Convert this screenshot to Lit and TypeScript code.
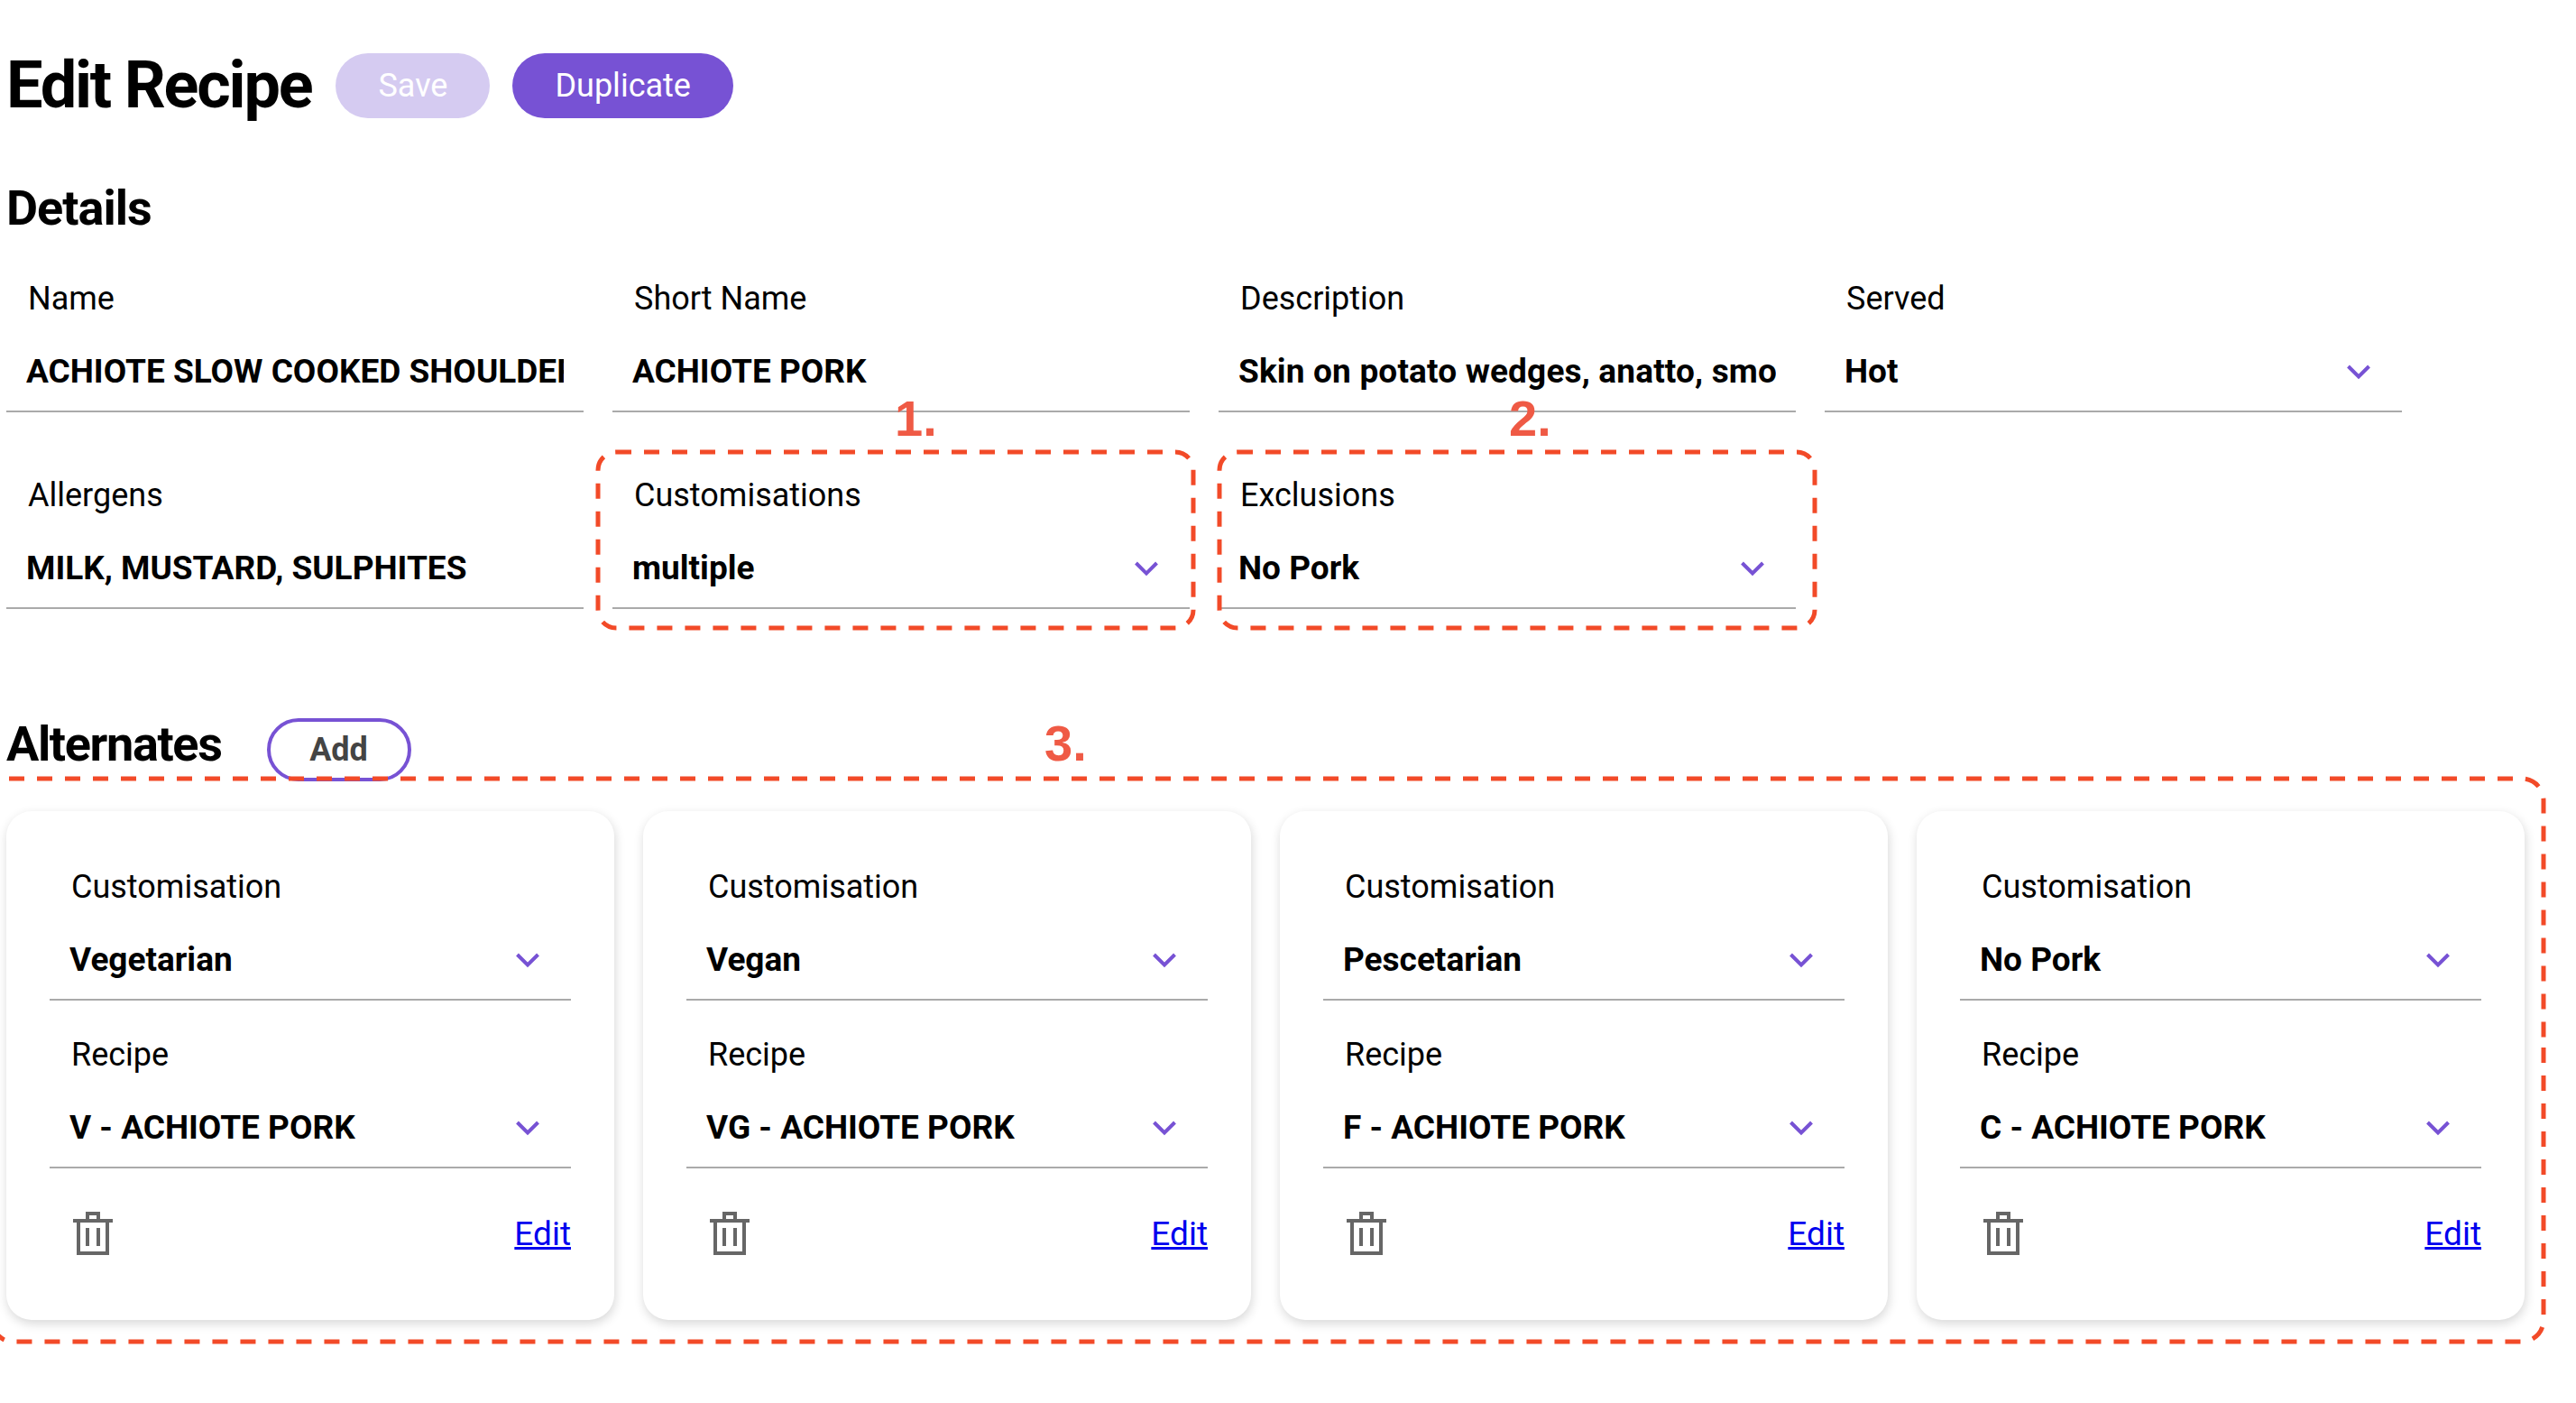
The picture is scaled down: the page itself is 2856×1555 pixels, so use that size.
import { LitElement, html, css, svg } from 'lit';
import { customElement } from 'lit/decorators.js';

interface Field {
  label: string;
  value: string;
  select?: boolean;
  tracked?: boolean;
}

interface Alternate {
  customisation: string;
  recipe: string;
}

const details: Field[] = [
  { label: 'Name', value: 'ACHIOTE SLOW COOKED SHOULDER' },
  { label: 'Short Name', value: 'ACHIOTE PORK' },
  { label: 'Description', value: 'Skin on potato wedges, anatto, smoked paprika', tracked: true },
  { label: 'Served', value: 'Hot', select: true },
  { label: 'Allergens', value: 'MILK, MUSTARD, SULPHITES' },
  { label: 'Customisations', value: 'multiple', select: true },
  { label: 'Exclusions', value: 'No Pork', select: true },
];

const alternates: Alternate[] = [
  { customisation: 'Vegetarian', recipe: 'V - ACHIOTE PORK' },
  { customisation: 'Vegan', recipe: 'VG - ACHIOTE PORK' },
  { customisation: 'Pescetarian', recipe: 'F - ACHIOTE PORK' },
  { customisation: 'No Pork', recipe: 'C - ACHIOTE PORK' },
];

const chevron = html`<svg class="chevron" viewBox="0 0 26 17" aria-hidden="true">
  <path d="M1.5 2 L13 13.5 L24.5 2" fill="none" stroke="currentColor" stroke-width="4" />
</svg>`;

const trash = html`<svg class="trash" viewBox="0 0 44 48" aria-hidden="true">
  <path
    d="M0 10 H44 M6 10 V46 H38 V10 M16 10 V2 H28 V10 M16 18 V38 M28 18 V38"
    fill="none"
    stroke="currentColor"
    stroke-width="4"
  />
</svg>`;

@customElement('app-root')
export class AppRoot extends LitElement {
  static styles = css`
    :host {
      display: block;
      position: relative;
      width: 2856px;
      height: 1555px;
      overflow: hidden;
      background: #fff;
      color: #000;
      font-family: Roboto, sans-serif;
    }
    .page {
      padding: 59px 0 0 7px;
    }
    .title-row {
      display: flex;
      align-items: center;
      height: 72px;
    }
    h1 {
      margin: 0 27px 0 0;
      font-size: 72px;
      line-height: 72px;
      font-weight: 700;
      letter-spacing: -2.2px;
    }
    .btn {
      height: 72px;
      padding: 0 47px;
      margin-right: 25px;
      border: 0;
      border-radius: 36px;
      background: #7752d4;
      color: #fff;
      font: 400 36px Roboto, sans-serif;
    }
    .btn.disabled {
      background: #d5cbf1;
    }
    h2 {
      margin: 0;
      font-size: 54px;
      line-height: 60px;
      font-weight: 700;
      letter-spacing: -1px;
    }
    .details-title {
      margin: 70px 0 46px 0;
    }
    .grid {
      display: grid;
      grid-template-columns: repeat(4, 640px);
      column-gap: 32px;
      row-gap: 68px;
    }
    .field {
      display: flex;
      flex-direction: column;
      height: 150px;
      box-sizing: border-box;
      border-bottom: 2px solid #aaa;
    }
    .label {
      height: 46px;
      padding: 1px 0 0 24px;
      box-sizing: border-box;
      font-size: 36px;
      line-height: 46px;
    }
    .control {
      display: flex;
      align-items: center;
      height: 46px;
      margin-top: 36px;
      padding: 0 22px;
    }
    .value {
      flex: 1;
      min-width: 0;
      overflow: hidden;
      white-space: nowrap;
      font-size: 37px;
      line-height: 46px;
      font-weight: 700;
    }
    .value.tracked {
      letter-spacing: 0.16px;
    }
    .chevron {
      flex: none;
      width: 26px;
      height: 17px;
      margin: 0 13px 0 10px;
      color: #7752d4;
    }
    .alt-row {
      display: flex;
      align-items: center;
      height: 70px;
      margin-top: 121px;
    }
    .alt-row h2 {
      margin: 0 0 12px 0;
      letter-spacing: -1.36px;
    }
    .add {
      width: 160px;
      height: 70px;
      margin-left: 50px;
      padding: 0;
      box-sizing: border-box;
      border: 4px solid #7752d4;
      border-radius: 35px;
      background: transparent;
      color: #444;
      font: 700 36px Roboto, sans-serif;
    }
    .cards {
      display: grid;
      grid-template-columns: repeat(4, 674px);
      column-gap: 32px;
      margin-top: 33px;
    }
    .card {
      display: flex;
      flex-direction: column;
      gap: 36px;
      height: 564px;
      box-sizing: border-box;
      padding: 60px 48px 0;
      border-radius: 28px;
      background: #fff;
      box-shadow: 1px 4px 12px rgba(0, 0, 0, 0.16);
    }
    .footer {
      display: flex;
      align-items: center;
      justify-content: space-between;
      height: 48px;
      margin-top: 12px;
      padding-left: 26px;
    }
    .trash {
      display: block;
      width: 44px;
      height: 48px;
      color: #666;
    }
    .edit {
      color: #0000ee;
      font-size: 37px;
      text-decoration: underline;
    }
    .marks {
      position: absolute;
      left: 0;
      top: 0;
      width: 2856px;
      height: 1555px;
      pointer-events: none;
    }
    .dash {
      fill: none;
      stroke: #f24a28;
      stroke-width: 5;
      stroke-dasharray: 17 14;
    }
    .num {
      position: absolute;
      color: #ef5a45;
      font: 700 56px/56px 'Liberation Sans', sans-serif;
    }
    .num-1 {
      left: 992px;
      top: 436px;
    }
    .num-2 {
      left: 1673px;
      top: 436px;
    }
    .num-3 {
      left: 1158px;
      top: 796px;
    }
  `;

  private renderField(field: Field) {
    return html`<div class="field">
      <div class="label">${field.label}</div>
      <div class="control">
        <div class="value ${field.tracked ? 'tracked' : ''}">${field.value}</div>
        ${field.select ? chevron : null}
      </div>
    </div>`;
  }

  private renderCard(alt: Alternate) {
    return html`<div class="card">
      ${this.renderField({ label: 'Customisation', value: alt.customisation, select: true })}
      ${this.renderField({ label: 'Recipe', value: alt.recipe, select: true })}
      <div class="footer">
        ${trash}
        <a class="edit" href="#">Edit</a>
      </div>
    </div>`;
  }

  render() {
    return html`
      <div class="page">
        <div class="title-row">
          <h1>Edit Recipe</h1>
          <button class="btn disabled">Save</button>
          <button class="btn">Duplicate</button>
        </div>
        <h2 class="details-title">Details</h2>
        <div class="grid">${details.map((f) => this.renderField(f))}</div>
        <div class="alt-row">
          <h2>Alternates</h2>
          <button class="add">Add</button>
        </div>
        <div class="cards">${alternates.map((a) => this.renderCard(a))}</div>
      </div>

      <!-- review annotations drawn over the page -->
      <svg class="marks" viewBox="0 0 2856 1555" aria-hidden="true">
        ${svg`<rect class="dash" x="663" y="501" width="660" height="195" rx="20" />
          <rect class="dash" x="1352" y="501" width="660" height="195" rx="20" />
          <path class="dash" d="M2820 1161 V1463 A24 24 0 0 1 2796 1487 H14 Q4 1487 -4 1478 M10 863 H2796 A24 24 0 0 1 2820 887 V1161" />`}
      </svg>
      <span class="num num-1">1.</span>
      <span class="num num-2">2.</span>
      <span class="num num-3">3.</span>
    `;
  }
}

declare global {
  interface HTMLElementTagNameMap {
    'app-root': AppRoot;
  }
}
